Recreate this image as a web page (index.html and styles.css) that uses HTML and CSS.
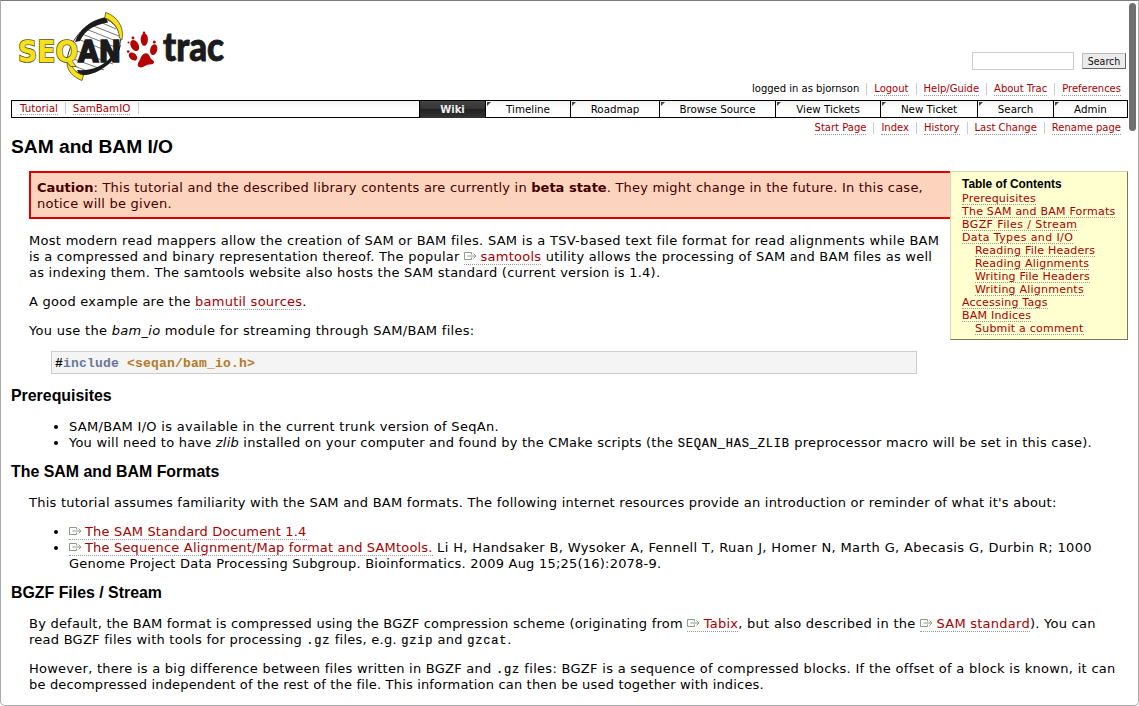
FILE: index.html
```html
<!DOCTYPE html>
<html lang="en">
<head>
<meta charset="utf-8">
<title>SAM and BAM I/O</title>
<link rel="stylesheet" href="styles.css">
</head>
<body>
<svg width="0" height="0" class="defs">
  <symbol id="ext" viewBox="0 0 13 9">
    <path d="M7.500 2.500V.5H.5v7h7v-2M3.500 4h8M9.500 1.500L12 4 9.500 6.500" fill="none" stroke="#8c9c84"/>
  </symbol>
</svg>
<div class="page">
  <header class="banner">
    <svg class="logo" width="222" height="74" viewBox="14 10 222 74" role="img" aria-label="SeqAn trac">
      <path d="M105 19C88 20 70 38 67 60C67 67 72 71 80 73C100 75 119 56 121 38C119 29 113 21 105 19Z" fill="#fff" stroke="#333" stroke-width="1"/>
      <g stroke="#666" stroke-width=".9">
        <path d="M98 21L116 29M91 25L119 36M86 29L121 43M82 34L120 49M78 39L117 55M74 50L113 64M71 58L104 70M69 64L92 73"/>
      </g>
      <path d="M106 17C90 20 79 30 75 42L80 41C85 30 94 25 108 22.500Z" fill="#1b1b1b"/>
      <path d="M121 44C119 60 97 77 80 75L77 70C92 71 103 66 111 57Z" fill="#1b1b1b"/>
      <path d="M105.700 12.500L104.700 17.800C113 21 119 28 119.500 38L121.800 40C125 28 117 16 105.700 12.500Z" fill="#f7e11c" stroke="#55500f" stroke-width=".8"/>
      <path d="M67 62C67 71 73 77 82 80.500L83.500 75C77 74 72 69 71 62Z" fill="#f7e11c" stroke="#55500f" stroke-width=".8"/>
      <text class="logo-name" x="18" y="61.500" textLength="103" lengthAdjust="spacingAndGlyphs">SEQ<tspan class="logo-an">AN</tspan></text>
      <g fill="#b70000">
        <ellipse cx="144.300" cy="39.500" rx="3.600" ry="6.300"/>
        <ellipse cx="134.700" cy="45.500" rx="3.900" ry="6" transform="rotate(-28 134.700 45.500)"/>
        <ellipse cx="153.700" cy="49.700" rx="3.500" ry="5.500" transform="rotate(14 153.700 49.700)"/>
        <ellipse cx="133" cy="56.500" rx="3.400" ry="4.800" transform="rotate(-48 133 56.500)"/>
        <path d="M143 54.500C146 52 149 54 150 57S154.500 60 154 62.500S149.500 64 147 65S141.500 68.500 139 67S138.500 62 139.500 60.500S140.500 56.500 143 54.500Z"/>
        <circle cx="144" cy="32.700" r="1.300"/><circle cx="133" cy="38" r="1.400"/><circle cx="154.300" cy="42" r="1.500"/>
        <circle cx="128.200" cy="51.500" r="1.300"/><circle cx="128.500" cy="42.500" r="1"/>
      </g>
      <text class="logo-trac" x="163" y="61" textLength="61" lengthAdjust="spacingAndGlyphs">trac</text>
    </svg>
    <div class="tools">
      <form class="search"><input type="text" aria-label="Search"><button type="button">Search</button></form>
      <ul class="nav">
        <li>logged in as bjornson</li>
        <li><a>Logout</a></li>
        <li><a>Help/Guide</a></li>
        <li><a>About Trac</a></li>
        <li><a>Preferences</a></li>
      </ul>
    </div>
  </header>
  <nav class="mainnav">
    <ul class="path"><li><a>Tutorial</a></li><li><a>SamBamIO</a></li></ul>
    <div class="tab active">Wiki</div>
    <div class="tab">Timeline</div>
    <div class="tab">Roadmap</div>
    <div class="tab">Browse Source</div>
    <div class="tab">View Tickets</div>
    <div class="tab">New Ticket</div>
    <div class="tab">Search</div>
    <div class="tab">Admin</div>
  </nav>
  <ul class="nav context">
    <li><a>Start Page</a></li>
    <li><a>Index</a></li>
    <li><a>History</a></li>
    <li><a>Last Change</a></li>
    <li><a>Rename page</a></li>
  </ul>
  <main>
    <h1>SAM and BAM I/O</h1>
    <aside class="toc">
      <h4>Table of Contents</h4>
      <ol>
        <li><a>Prerequisites</a></li>
        <li><a>The SAM and BAM Formats</a></li>
        <li><a class="wide">BGZF Files / Stream</a></li>
        <li><a class="wide">Data Types and I/O</a></li>
        <li class="sub"><a>Reading File Headers</a></li>
        <li class="sub"><a>Reading Alignments</a></li>
        <li class="sub"><a>Writing File Headers</a></li>
        <li class="sub"><a>Writing Alignments</a></li>
        <li><a>Accessing Tags</a></li>
        <li><a>BAM Indices</a></li>
        <li class="sub"><a>Submit a comment</a></li>
      </ol>
    </aside>
    <div class="caution"><b>Caution</b>: This tutorial and the described library contents are currently in <b>beta state</b>. They might change in the future. In this case,<br>notice will be given.</div>
    <p><span class="wide">Most modern read mappers allow the creation of SAM or BAM files. SAM is a TSV-based text file format for read alignments while BAM</span><br>
      is a compressed and binary representation thereof. The popular <a><svg class="ext"><use href="#ext"/></svg>samtools</a> utility allows the processing of SAM and BAM files as well<br>
      as indexing them. The samtools website also hosts the SAM standard (current version is 1.4).</p>
    <p>A good example are the <a>bamutil sources</a>.</p>
    <p class="wide">You use the <i>bam_io</i> module for streaming through SAM/BAM files:</p>
    <pre>#<b>include</b> <span>&lt;seqan/bam_io.h&gt;</span></pre>
    <h2>Prerequisites</h2>
    <ul class="list">
      <li class="wide">SAM/BAM I/O is available in the current trunk version of SeqAn.</li>
      <li><span class="tight">You will need to have <i>zlib</i> installed on your computer and found by the CMake scripts (the</span> <code>SEQAN_HAS_ZLIB</code> preprocessor macro will be set in this case).</li>
    </ul>
    <h2 class="low">The SAM and BAM Formats</h2>
    <p class="even">This tutorial assumes familiarity with the SAM and BAM formats. The following internet resources provide an introduction or reminder of what it's about:</p>
    <ul class="list">
      <li><a class="snug"><svg class="ext"><use href="#ext"/></svg>The SAM Standard Document 1.4</a></li>
      <li><span class="wider"><a class="snug"><svg class="ext"><use href="#ext"/></svg>The Sequence Alignment/Map format and SAMtools.</a> Li H, Handsaker B, Wysoker A, Fennell T, Ruan J, Homer N, Marth G, Abecasis G, Durbin R; 1000</span><br>
        <span class="tight">Genome Project Data Processing Subgroup. Bioinformatics. 2009 Aug 15;25(16):2078-9.</span></li>
    </ul>
    <h2 class="low">BGZF Files / Stream</h2>
    <p><span class="tight">By default, the BAM format is compressed using the BGZF compression scheme (originating from</span> <a><svg class="ext"><use href="#ext"/></svg>Tabix</a>, <span class="wide">but also described in the</span> <a><svg class="ext"><use href="#ext"/></svg>SAM standard</a>). You can<br>
      read BGZF files with tools for processing <code>.gz</code> files, e.g. <code>gzip</code> and <code>gzcat</code>.</p>
    <p>However, there is a big difference between files written in BGZF and <code>.gz</code> <span class="wide">files: BGZF is a sequence of compressed blocks. If the offset of a block is known, it can</span><br>
      <span class="snug">be decompressed independent of the rest of the file. This information can then be used together with indices.</span></p>
  </main>
  <div class="scroll-thumb"></div>
</div>
</body>
</html>
```
FILE: styles.css
```css
* { box-sizing: border-box; }
body { margin: 0; background: #fff; color: #000; font: 13px/16px "DejaVu Sans", Verdana, sans-serif; }
ul, ol { list-style: none; margin: 0; padding: 0; }
a { color: #a80000; border-bottom: 1px dotted #999; }
.defs { position: absolute; }

.page {
  position: relative;
  height: 706px;
  overflow: hidden;
  padding: 0 10px;
  border: 1px solid #aaa;
  border-top-color: #7c7c7c;
  border-radius: 0 0 5px 5px;
}
.banner { display: flex; justify-content: space-between; height: 99px; }
.logo { margin: 9px 0 0 3px; overflow: visible; }
.logo text { font-weight: bold; }
.logo .logo-name { font-family: "DejaVu Sans", sans-serif; font-size: 29.500px; fill: #f7e11c; stroke: #55500f; stroke-width: 1.600px; paint-order: stroke; }
.logo .logo-an { fill: #1b1b1b; stroke: #1b1b1b; }
.logo .logo-trac { fill: #1b1b1b; font-family: Lato, sans-serif; font-size: 39px; font-weight: 900; stroke: #1b1b1b; stroke-width: .9px; }

.tools { display: flex; flex-direction: column; align-items: flex-end; }
.search { display: flex; gap: 8px; margin: 51px 2px 0 0; height: 18px; }
.search input { width: 102px; height: 18px; padding: 0; border: 1px solid #ccc; background: #fff; }
.search button {
  width: 44px; height: 16px; margin-top: 1px; padding: 0;
  border: 1px solid; border-color: #bbb #666 #666 #bbb; border-radius: 0;
  background: #ebebeb; color: #111;
  font: 10.500px/13px "DejaVu Sans Condensed", "DejaVu Sans", sans-serif;
}
.nav { display: flex; justify-content: flex-end; font-size: 10px; line-height: 12px; }
.tools .nav { margin-top: 13px; }
.nav li { height: 12px; padding: 0 7px; white-space: nowrap; }
.nav li + li { border-left: 1px solid #ccc; }
.nav a, .path a { display: inline-block; height: 13px; }

.mainnav {
  display: grid;
  grid-template-columns: 407px 66px 85px 89px 116px 105px 97px 76px 1fr;
  height: 18px;
  border: 1px solid #000;
  background: linear-gradient(#f2f2f2, #fff 45%);
  font-size: 10.300px;
  line-height: 16px;
}
.path { display: flex; }
.path li { height: 12px; margin-top: 1px; padding: 0 8px 0 7px; border-right: 1px solid #ccc; line-height: 12px; }
.path li:first-child { padding: 0 7px 0 8px; }
.tab { position: relative; border-left: 1px solid #000; text-align: center; }
.tab:not(.active)::before { content: ""; position: absolute; left: 1px; top: 1px; border: 2px solid; border-color: #444 transparent transparent #444; }
.active { background: linear-gradient(#444, #333 50%, #222 50%, #333); color: #eee; font-weight: bold; font-size: 10px; line-height: 17px; }
.context { margin-top: 4px; }

main { white-space: nowrap; letter-spacing: .25px; }
h1, h2, h4 { margin: 0; font-family: "Liberation Sans", Arial, sans-serif; font-weight: bold; letter-spacing: 0; }
h1 { margin: 1px 0 12px; font-size: 19.200px; line-height: 24px; }
h2 { margin: 10px 0 13px; font-size: 15.900px; line-height: 20px; }
.low { margin-top: 11px; }
p { margin: 13px 0 13px 18px; }
.wide { letter-spacing: .295px; }
.wider { letter-spacing: .365px; }
.even { letter-spacing: .24px; }
.tight { letter-spacing: .22px; }
.snug { letter-spacing: .175px; }

.toc {
  float: right;
  width: 178px; height: 169px;
  padding: 5px 0 0 11px;
  border: 1px solid; border-color: #d7d7b8 #77775c #77775c #d7d7b8;
  background: #ffffd0;
  font-size: 11px; line-height: 13px; letter-spacing: .22px;
}
.toc h4 { margin-bottom: 1px; font-size: 11.900px; line-height: 14px; }
.toc li { height: 13px; }
.toc a { display: inline-block; height: 13px; }
.toc .wide { letter-spacing: .4px; }
.sub { padding-left: 13px; }

.caution { margin: 0 0 14px 18px; padding: 7px 6px 5px; border: 2px solid #d00; background: #fcd3bd; color: #400; letter-spacing: .23px; }
.caution b { letter-spacing: 0; }
pre {
  width: 866px; height: 23px; margin: -1px 0 12px 40px; padding: 4px 3px 0;
  border: 1px solid #ccc; background: #f4f4f4;
  font: bold 13px/16px "Liberation Mono", "Courier New", monospace; letter-spacing: .2px;
}
pre b { color: #68789a; }
pre span { color: #b47a28; }
code { font: 12px/12px "Liberation Mono", "Courier New", monospace; letter-spacing: .8px; -webkit-text-stroke: .2px #000; }
.list { margin-left: 58px; list-style: disc; }
.ext { width: 13px; height: 9px; margin-right: 3.500px; }
.list .ext { margin-right: 3px; }
.scroll-thumb { position: absolute; left: 1128px; top: 2px; width: 7px; height: 128px; border-radius: 4px; background: #707070; }
```
